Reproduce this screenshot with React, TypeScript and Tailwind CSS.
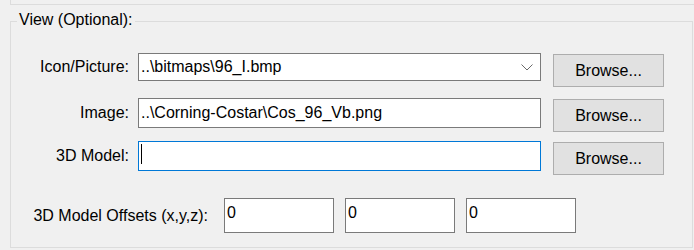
import { ChangeEvent, useState } from 'react';

function Label({ text }: { text: string }) {
  return <div className="w-[127px] pr-[9px] text-right whitespace-nowrap">{text}</div>;
}

function BrowseButton() {
  return (
    <button className="ml-[12px] mt-[1px] w-[111px] h-[33px] bg-[#e1e1e1] border border-[#adadad] text-[16px] text-black">
      Browse...
    </button>
  );
}

export default function App() {
  const [icon] = useState('..\\bitmaps\\96_I.bmp');
  const [image, setImage] = useState('..\\Corning-Costar\\Cos_96_Vb.png');
  const [model, setModel] = useState('');
  const [offsets, setOffsets] = useState(['0', '0', '0']);

  const setOffset = (i: number) => (e: ChangeEvent<HTMLInputElement>) => {
    const next = [...offsets];
    next[i] = e.target.value;
    setOffsets(next);
  };

  return (
    <div className="w-[694px] h-[250px] bg-[#f0f0f0] overflow-hidden text-[16px] text-black font-['Liberation_Sans',Arial,sans-serif]">
      <div className="ml-[10px] h-[5px] border-l border-b border-[#dcdcdc]" />

      <div className="relative ml-[10px] mt-[16px] w-[683px] h-[227px] border border-[#dcdcdc]">
        <span className="absolute left-[6px] top-[-11px] px-[2px] bg-[#f0f0f0] leading-[18px]">View (Optional):</span>

        <div className="pt-[31px]">
          <div className="flex items-start h-[45px]">
            <div className="flex items-center h-[28px]">
              <Label text="Icon/Picture:" />
              <div className="w-[403px] h-[28px] bg-white border border-[#7a7a7a] flex items-center pl-[2px] pr-[7px]">
                <span className="flex-1">{icon}</span>
                <svg width="12" height="7" viewBox="0 0 12 7" className="mt-[1px]">
                  <polyline points="0.5,0.5 6,6 11.5,0.5" fill="none" stroke="#6a6a6a" strokeWidth="1" />
                </svg>
              </div>
            </div>
            <BrowseButton />
          </div>

          <div className="flex items-start h-[43px]">
            <div className="flex items-center h-[30px]">
              <Label text="Image:" />
              <input
                value={image}
                onChange={(e) => setImage(e.target.value)}
                className="w-[403px] h-[30px] bg-white border border-[#7a7a7a] px-[2px] outline-none"
              />
            </div>
            <BrowseButton />
          </div>

          <div className="flex items-start h-[57px]">
            <div className="flex items-center h-[30px]">
              <Label text="3D Model:" />
              <div className="relative w-[403px] h-[30px] bg-white border border-[#0078d7]">
                <input
                  value={model}
                  onChange={(e) => setModel(e.target.value)}
                  className="w-full h-full px-[2px] outline-none bg-transparent"
                />
                <span className="absolute left-[2px] top-[2px] w-px h-[20px] bg-black" />
              </div>
            </div>
            <BrowseButton />
          </div>

          <div className="flex items-center h-[35px]">
            <div className="w-[213px] text-right pr-[16px] whitespace-nowrap">3D Model Offsets (x,y,z):</div>
            <div className="flex gap-[11px]">
              {offsets.map((v, i) => (
                <input
                  key={i}
                  value={v}
                  onChange={setOffset(i)}
                  className="w-[110px] h-[35px] bg-white border border-[#7a7a7a] px-[2px] pb-[6px] outline-none"
                />
              ))}
            </div>
          </div>
        </div>
      </div>
    </div>
  );
}
